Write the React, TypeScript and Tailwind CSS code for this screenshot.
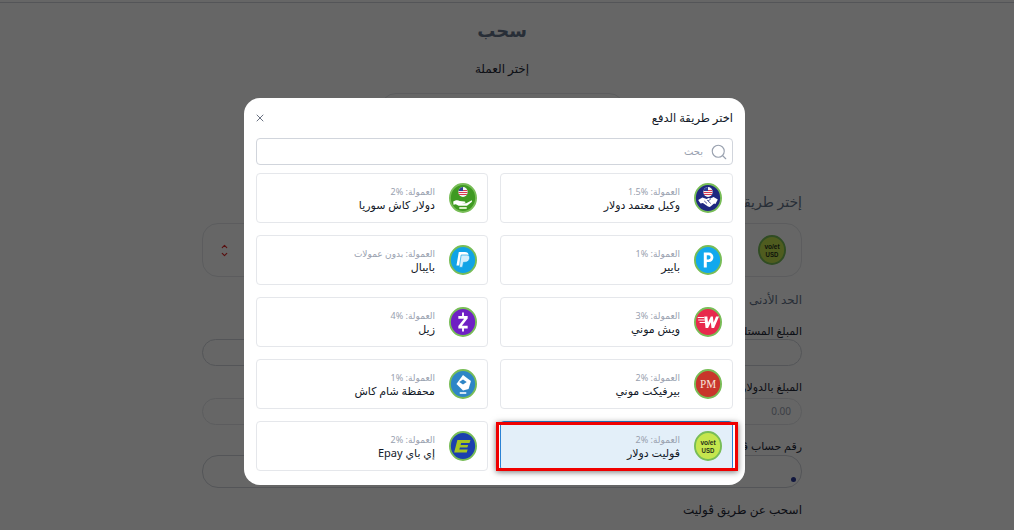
import { Search, X, ChevronUp, ChevronDown } from "lucide-react";
import type { ReactNode } from "react";

function Disc({ fill, children }: { fill: string; children?: ReactNode }) {
  return (
    <svg viewBox="0 0 30 30" preserveAspectRatio="none" className="w-[28px] h-[30px] shrink-0">
      <circle cx="15" cy="15" r="14" fill={fill} stroke="#78bd57" strokeWidth="2" />
      {children}
    </svg>
  );
}

function Flag() {
  return (
    <g>
      <circle cx="15" cy="9" r="5" fill="#f4f4f4" />
      <path d="M10.500 7.500h9M10.200 9.500h9.600M10.800 11.500h8.400" stroke="#d8314a" strokeWidth="1" />
      <path d="M11 6a5 5 0 0 1 4-2v4h-4.800z" fill="#2c3f93" />
    </g>
  );
}

const icons: Record<string, ReactNode> = {
  agent: (
    <Disc fill="#1e2880">
      <Flag />
      <path d="M4.500 17l4.500-2.500 4.500 1.500 2-1 2 .5 3.500-1.500 4.500 2.500-2.500 4.500-1.500-.5-4.500 3.500-2-.5-5.500-3.500-2.500.5z" fill="#fff" />
      <path d="M11 18l3 2.500M14 17l4 3.500M18 16l-3 2" stroke="#1e2880" strokeWidth=".8" fill="none" />
    </Disc>
  ),
  cash: (
    <Disc fill="#3f9a22">
      <Flag />
      <path d="M4.500 18.500c3-1.500 5-1.500 7-.5l5 .5c1.500.2 1.500 1.500 0 1.500l-3 .2 5 0 5-2.500c1-.4 1.700.5.800 1.200l-5 3.800h-9l-3-1.500-2.500.5z" fill="#fff" />
      <rect x="11" y="24" width="8" height="2" rx=".5" fill="#d7f0c4" />
    </Disc>
  ),
  payer: (
    <Disc fill="#11a8ee">
      <path d="M10.500 22.500V7.500h5.500a4.800 4.800 0 0 1 0 9.600h-2.300v5.400z M13.700 10.200v4.200h2a2.100 2.100 0 0 0 0-4.200z" fill="#fff" fillRule="evenodd" />
    </Disc>
  ),
  paypal: (
    <Disc fill="#10a3e6">
      <path d="M10.500 7h6.500c3 0 4.500 1.800 3.800 4.300-.7 2.800-2.800 4-5.500 4h-2l-1 5.200H8z" fill="#fff" />
      <path d="M13 10h6c2.500 0 3.500 1.500 3 3.500-.6 2.600-2.500 3.800-5 3.800h-1.500l-1 5H11z" fill="#d3effc" stroke="#10a3e6" strokeWidth=".7" />
    </Disc>
  ),
  wish: (
    <Disc fill="#e8294c">
      <path d="M11 9.500h3.300l.7 6 3-6h2.200l.8 6 2.600-6h3.200l-5.300 11.500h-2.700l-.8-5.700-2.900 5.700h-2.700z" fill="#fff" />
      <path d="M4 10.500h7M4.500 13h7M6 15.500h6.500" stroke="#fff" strokeWidth="1" />
    </Disc>
  ),
  zcash: (
    <Disc fill="#6f20c4">
      <path d="M10 9h10v2.600l-6.200 7.200h6.200V21.500H10v-2.600l6.200-7.200H10z" fill="#fff" />
      <path d="M15 5.500v4M15 20.500v4" stroke="#fff" strokeWidth="2" />
    </Disc>
  ),
  pm: (
    <Disc fill="#c8352b">
      <text x="15" y="19.500" textAnchor="middle" fontSize="12" fill="#f6e2d8" fontFamily="Liberation Serif, serif">PM</text>
    </Disc>
  ),
  sham: (
    <Disc fill="#2e86c6">
      <path d="M15 6l8.500 6-2.500 8-6 1.500-7-6.500z" fill="#fff" />
      <path d="M11 13l4-2.500 4 2.500-4 2.500z" fill="#2e86c6" />
      <rect x="11.500" y="23" width="7" height="2" fill="#cfe6f7" />
    </Disc>
  ),
  epay: (
    <Disc fill="#1b3fae">
      <path d="M9 9h14l-1 3H13l-.5 2h8l-.8 2.500h-8L11 18.500h9l-1 3H5.500z" fill="#a6c521" />
    </Disc>
  ),
  voilet: (
    <Disc fill="#c5e64e">
      <text x="15" y="14.500" textAnchor="middle" fontSize="7" fontWeight="700" fill="#27331a" fontFamily="Liberation Sans, sans-serif">vo/et</text>
      <text x="15" y="22.500" textAnchor="middle" fontSize="6.500" fontWeight="700" fill="#27331a" fontFamily="Liberation Sans, sans-serif">USD</text>
    </Disc>
  ),
};

const methods = [
  { icon: "agent", fee: "1.5%", name: "وكيل معتمد دولار" },
  { icon: "cash", fee: "2%", name: "دولار كاش سوريا" },
  { icon: "payer", fee: "1%", name: "بايير" },
  { icon: "paypal", fee: "بدون عمولات", name: "بايبال" },
  { icon: "wish", fee: "3%", name: "ويش موني" },
  { icon: "zcash", fee: "4%", name: "زيل" },
  { icon: "pm", fee: "2%", name: "بيرفيكت موني" },
  { icon: "sham", fee: "1%", name: "محفظة شام كاش" },
  { icon: "voilet", fee: "2%", name: "ڤوليت دولار", selected: true },
  { icon: "epay", fee: "2%", name: "إي باي Epay" },
];

function PageBehind() {
  return (
    <div className="w-[600px] mr-[212px] flex flex-col text-[#1f2937]">
      <h1 className="text-center text-[18px] font-bold leading-[26px] mt-[14px] text-[#64748b]">سحب</h1>
      <p className="text-center text-[12px] leading-[18px] mt-[17px]">إختر العملة</p>
      <div className="w-[245px] h-[60px] mx-auto mt-[15px] rounded-2xl border border-gray-200" />
      <p className="text-[14px] leading-[20px] mt-[39px] text-[#64748b]">إختر طريقة</p>
      <div className="h-[54px] mt-[11px] rounded-2xl border border-gray-200 flex items-center justify-between pr-[14px] pl-[17px]">
        <div className="w-[30px] h-[31px] flex items-center justify-center">{icons.voilet}</div>
        <div className="flex flex-col items-center text-[#dc2626]">
          <ChevronUp size={9} strokeWidth={3} className="-mb-[1px]" />
          <ChevronDown size={9} strokeWidth={3} />
        </div>
      </div>
      <p className="text-[12px] leading-[18px] mt-[14px] text-[#64748b]">الحد الأدنى</p>
      <p className="text-[11px] leading-[16px] mt-[14px]">المبلغ المستلم</p>
      <div className="h-[27px] rounded-2xl border border-gray-300" />
      <p className="text-[11px] leading-[16px] mt-[13px]">المبلغ بالدولار</p>
      <div className="h-[27px] mt-[3px] rounded-2xl border border-gray-200 flex items-center px-[10px] text-[10px] text-gray-400">
        <span dir="ltr">0.00</span>
      </div>
      <p className="text-[11px] leading-[16px] mt-[13px]">رقم حساب ڤوليت</p>
      <div className="h-[33px] mt-[1px] rounded-2xl border border-gray-300 flex items-end px-[5px] pb-[5px]">
        <span className="w-[5px] h-[5px] rounded-full bg-[#2b3a9b]" />
      </div>
      <p className="text-[12px] leading-[18px] mt-[13px]">اسحب عن طريق ڤوليت</p>
    </div>
  );
}

export default function App() {
  return (
    <div dir="rtl" className="relative h-[530px] overflow-hidden bg-white font-['Noto_Sans','DejaVu_Sans',sans-serif]">
      <div className="h-[3px] border-b border-gray-300" />
      <PageBehind />

      {/* modal */}
      <div className="absolute inset-0 bg-black/60 flex justify-center items-start pt-[98px] pr-[25px]">
        <div className="w-[501px] h-[387px] bg-white rounded-2xl px-[12px] flex flex-col">
          <div className="flex items-center justify-between h-[40px] shrink-0">
            <h2 className="text-[11.5px] text-[#111827]">اختر طريقة الدفع</h2>
            <X size={12} className="text-gray-500 ml-[-2px]" />
          </div>
          <div className="h-[27px] shrink-0 rounded border border-gray-300 flex items-center gap-[7px] pl-[4px] pr-[4px] text-[10px] text-gray-400">
            <Search size={18} strokeWidth={1.5} />
            <span>بحث</span>
          </div>
          <div className="grid grid-cols-[233px_232px] gap-[12px] mt-[8px]">
            {methods.map((m) => (
              <div
                key={m.icon}
                className={`relative h-[50px] rounded border flex items-center gap-[14px] pr-[10px] ${
                  m.selected ? "bg-[#e3eff9] border-[#2b82d4]" : "border-gray-200 bg-white"
                }`}
              >
                {icons[m.icon]}
                <div className="flex flex-col pt-[2px]">
                  <span className="text-[9px] leading-[13px] text-gray-400">
                    العمولة: <bdi dir="ltr">{m.fee}</bdi>
                  </span>
                  <span className="text-[11px] leading-[17px] -mt-[2px] text-[#111827]">{m.name}</span>
                </div>
                {m.selected && (
                  <span className="absolute top-0 -bottom-[1px] -left-[5px] -right-[6px] border-[3px] border-[#ef0000] shadow-[0_1px_6px_rgba(0,0,0,0.55)]" />
                )}
              </div>
            ))}
          </div>
        </div>
      </div>
    </div>
  );
}
